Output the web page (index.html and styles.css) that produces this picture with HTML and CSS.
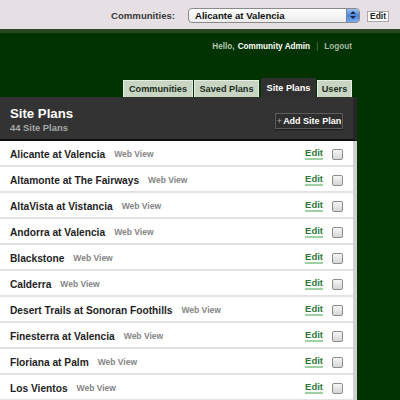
FILE: index.html
```html
<!DOCTYPE html>
<html>
<head>
<meta charset="utf-8">
<link rel="stylesheet" href="styles.css">
</head>
<body>
<div class="topbar">
  <span class="toplabel">Communities:</span>
  <div class="select">
    <span class="select-text">Alicante at Valencia</span>
    <span class="stepper">
      <svg width="8" height="10" viewBox="0 0 8 10"><path d="M1 4 L4 1 L7 4 Z M1 6 L4 9 L7 6 Z" fill="#1a2a50"/></svg>
    </span>
  </div>
  <button class="smallbtn">Edit</button>
</div>
<div class="greenarea">
  <div class="userline">
    <span class="hello">Hello,</span> <span class="uname">Community Admin</span>
    <span class="sep">|</span>
    <span class="logout">Logout</span>
  </div>
  <nav class="tabs">
    <span class="tab">Communities</span>
    <span class="tab">Saved Plans</span>
    <span class="tab active">Site Plans</span>
    <span class="tab">Users</span>
  </nav>
  <div class="panel">
    <div class="panel-head">
      <div class="titles">
        <div class="title">Site Plans</div>
        <div class="subtitle">44 Site Plans</div>
      </div>
      <span class="addbtn"><span class="plus">+</span>Add Site Plan</span>
    </div>
    <ul class="list">
      <li class="row"><span class="name">Alicante at Valencia</span><span class="wv">Web View</span><a class="edit">Edit</a><span class="cb"></span></li>
      <li class="row"><span class="name">Altamonte at The Fairways</span><span class="wv">Web View</span><a class="edit">Edit</a><span class="cb"></span></li>
      <li class="row"><span class="name">AltaVista at Vistancia</span><span class="wv">Web View</span><a class="edit">Edit</a><span class="cb"></span></li>
      <li class="row"><span class="name">Andorra at Valencia</span><span class="wv">Web View</span><a class="edit">Edit</a><span class="cb"></span></li>
      <li class="row"><span class="name">Blackstone</span><span class="wv">Web View</span><a class="edit">Edit</a><span class="cb"></span></li>
      <li class="row"><span class="name">Calderra</span><span class="wv">Web View</span><a class="edit">Edit</a><span class="cb"></span></li>
      <li class="row"><span class="name">Desert Trails at Sonoran Foothills</span><span class="wv">Web View</span><a class="edit">Edit</a><span class="cb"></span></li>
      <li class="row"><span class="name">Finesterra at Valencia</span><span class="wv">Web View</span><a class="edit">Edit</a><span class="cb"></span></li>
      <li class="row"><span class="name">Floriana at Palm</span><span class="wv">Web View</span><a class="edit">Edit</a><span class="cb"></span></li>
      <li class="row"><span class="name">Los Vientos</span><span class="wv">Web View</span><a class="edit">Edit</a><span class="cb"></span></li>
    </ul>
  </div>
</div>
</body>
</html>
```
FILE: styles.css
```css
* { box-sizing: border-box; }
html, body {
  margin: 0;
  padding: 0;
  background: #003300;
  font-family: "Liberation Sans", Arial, sans-serif;
  font-weight: bold;
  overflow: hidden;
}
.topbar {
  height: 29px;
  background: #e6e0e4;
  display: flex;
  align-items: center;
  justify-content: flex-end;
  padding-right: 11px;
}
.toplabel {
  font-size: 9.6px;
  color: #3a3a3a;
  margin-right: 13px;
  margin-top: 1px;
}
.select {
  width: 172px;
  height: 15px;
  border: 1px solid #8a8a8a;
  border-radius: 4px;
  background: linear-gradient(#ffffff, #ececec);
  display: flex;
  align-items: center;
  justify-content: space-between;
  padding-left: 6px;
  overflow: hidden;
  margin-right: 7px;
  margin-top: 1px;
}
.select-text {
  font-size: 9.6px;
  color: #111;
}
.stepper {
  width: 13px;
  height: 15px;
  background: linear-gradient(#a9c8f0, #4f86d8 50%, #7fb0ee);
  display: flex;
  align-items: center;
  justify-content: center;
  border-left: 1px solid #6a86b0;
}
.smallbtn {
  font-family: "Liberation Sans", Arial, sans-serif;
  font-weight: bold;
  font-size: 8.5px;
  height: 11px;
  width: 22px;
  padding: 0;
  line-height: 9px;
  background: #fff;
  border: 1px solid #a9a9a9;
  color: #222;
  margin-top: 3px;
}
.greenarea {
  border-top: 4px solid #284823;
}
.userline {
  display: flex;
  justify-content: flex-end;
  align-items: center;
  gap: 3px;
  padding-right: 48px;
  height: 25px;
  padding-top: 1px;
  font-size: 8.2px;
}
.hello { color: #b9c4b2; }
.uname { color: #ffffff; }
.sep { color: #6d8064; margin: 0 3px; font-weight: normal; }
.logout { color: #aab6a3; }
.tabs {
  display: flex;
  justify-content: flex-end;
  align-items: flex-end;
  padding-right: 48px;
  margin-top: 20px;
  height: 19px;
}
.tab {
  height: 17px;
  background: #c8d5c3;
  border: 1px solid #e6eee2;
  border-bottom: none;
  color: #1c2c1c;
  font-size: 9.2px;
  display: flex;
  align-items: center;
  justify-content: center;
  padding: 0;
  white-space: nowrap;
}
.tab:nth-child(1) { width: 70px; }
.tab:nth-child(2) { width: 65px; margin-left: 1px; }
.tab:nth-child(3) { width: 55px; margin-left: 2px; }
.tab:nth-child(4) { width: 35px; margin-left: 1px; }
.tab.active {
  background: #303030;
  border-color: #303030;
  color: #fff;
  height: 19px;
}
.panel {
  width: 357px;
}
.panel-head {
  height: 44px;
  background: #333333;
  border-right: 4px solid #262626;
  border-bottom: 2px solid #0c0c0c;
  display: flex;
  justify-content: space-between;
  align-items: flex-start;
  padding: 9px 10px 0 10px;
}
.title {
  color: #fff;
  font-size: 13.2px;
  line-height: 15px;
}
.subtitle {
  color: #a8a8a8;
  font-size: 9.4px;
  line-height: 11px;
  margin-top: 1px;
}
.addbtn {
  margin-top: 7px;
  width: 68px;
  height: 16px;
  border: 1px solid #5c5c5c;
  background: #2e2e2e;
  color: #fff;
  font-size: 9px;
  display: flex;
  align-items: center;
  justify-content: center;
  box-shadow: 0 1px 1px #1e1e1e;
}
.plus { color: #aaa; font-weight: normal; margin-right: 1px; }
.list {
  list-style: none;
  margin: 0;
  padding: 0;
  background: #ffffff;
  border-right: 4px solid #d0d0d0;
}
.row {
  height: 26px;
  border-bottom: 2px solid #e2e2e2;
  display: flex;
  align-items: center;
  padding: 2px 10px 0 10px;
}
.name {
  font-size: 10.2px;
  color: #1e1e1e;
}
.wv {
  font-size: 8.5px;
  color: #858585;
  margin-left: 9px;
  flex: 1;
}
.edit {
  font-size: 9.5px;
  color: #2d7a38;
  text-decoration: none;
  border-bottom: 2px solid #9fd0a3;
  line-height: 10px;
  margin-right: 9px;
}
.cb {
  width: 11px;
  height: 11px;
  border: 1px solid #8c8c8c;
  border-radius: 2px;
  background: linear-gradient(#f6f6f6, #d6d6d6);
}
```
